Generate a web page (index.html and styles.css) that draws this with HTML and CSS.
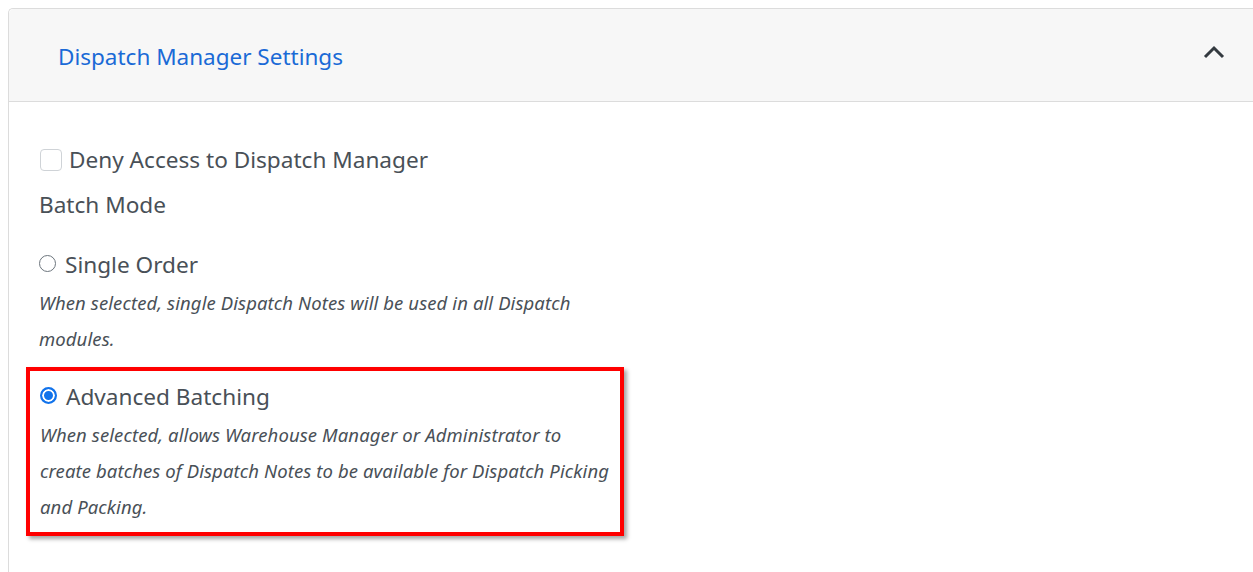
FILE: index.html
```html
<!DOCTYPE html>
<html>
<head>
<meta charset="utf-8">
<link rel="stylesheet" href="styles.css">
</head>
<body>
<div class="card">
  <div class="card-header">
    <span class="title">Dispatch Manager Settings</span>
    <svg class="chev" width="22" height="14" viewBox="0 0 22 14"><path d="M2 12 L11 3 L20 12" fill="none" stroke="#343a40" stroke-width="3"/></svg>
  </div>
  <div class="card-body">
    <label class="check-row"><span class="checkbox"></span><span class="lbl">Deny Access to Dispatch Manager</span></label>
    <div class="section">Batch Mode</div>
    <div class="option">
      <label class="radio-row"><span class="radio"></span><span class="lbl">Single Order</span></label>
      <p class="desc">When selected, single Dispatch Notes will be used in all Dispatch modules.</p>
    </div>
    <div class="highlight">
      <div class="option">
        <label class="radio-row"><span class="radio checked"></span><span class="lbl">Advanced Batching</span></label>
        <p class="desc">When selected, allows Warehouse Manager or Administrator to create batches of Dispatch Notes to be available for Dispatch Picking and Packing.</p>
      </div>
    </div>
  </div>
</div>
</body>
</html>
```
FILE: styles.css
```css
html, body { overflow: hidden; }
body {
  margin: 8px 0 0 8px;
  font-family: "Noto Sans", "Open Sans", sans-serif;
  color: #495057;
  background: #fff;
}
.card {
  border: 1px solid #dcdcdc;
  border-right: none;
  border-bottom: none;
  border-top-left-radius: 5px;
  height: 563px;
}
.card-header {
  height: 92px;
  background: #f7f7f7;
  border-bottom: 1px solid #dcdcdc;
  border-top-left-radius: 5px;
  display: flex;
  align-items: center;
  justify-content: space-between;
  padding: 0 28px 0 49px;
}
.title {
  color: #1a6ad6;
  font-size: 22.5px;
  margin-top: 2px;
}
.chev { margin-top: -6px; }
.card-body {
  padding: 43px 0 0 30px;
}
.check-row, .radio-row {
  display: flex;
  align-items: center;
  height: 30px;
}
.checkbox {
  width: 20px;
  height: 20px;
  border: 1px solid #cfd3d7;
  border-radius: 4px;
  margin: 0 7px 0 1px;
  background: #fff;
}
.lbl {
  font-size: 22.6px;
  line-height: 30px;
}
.section {
  font-size: 22.6px;
  line-height: 30px;
  margin-top: 15px;
}
.option { margin-top: 30px; }
.radio {
  box-sizing: border-box;
  width: 17px;
  height: 17px;
  border: 1px solid #6c757d;
  border-radius: 50%;
  margin: -4px 9px 0 0;
  background: #fff;
}
.radio.checked {
  border: 2px solid #1273eb;
  background: #1273eb;
  box-shadow: inset 0 0 0 2px #fff;
}
.desc {
  margin: 5px 0 0;
  font-style: italic;
  font-size: 18.5px;
  letter-spacing: 0.1px;
  line-height: 36px;
  width: 576px;
}
.highlight {
  box-sizing: border-box;
  margin: 10px 0 0 -13px;
  width: 598px;
  padding: 11px 0 7px 10px;
  border: 4px solid #ff0000;
  box-shadow: 3px 3px 4px rgba(0,0,0,0.35);
}
.highlight .option { margin-top: 0; }
.highlight .desc { width: 576px; }
```
